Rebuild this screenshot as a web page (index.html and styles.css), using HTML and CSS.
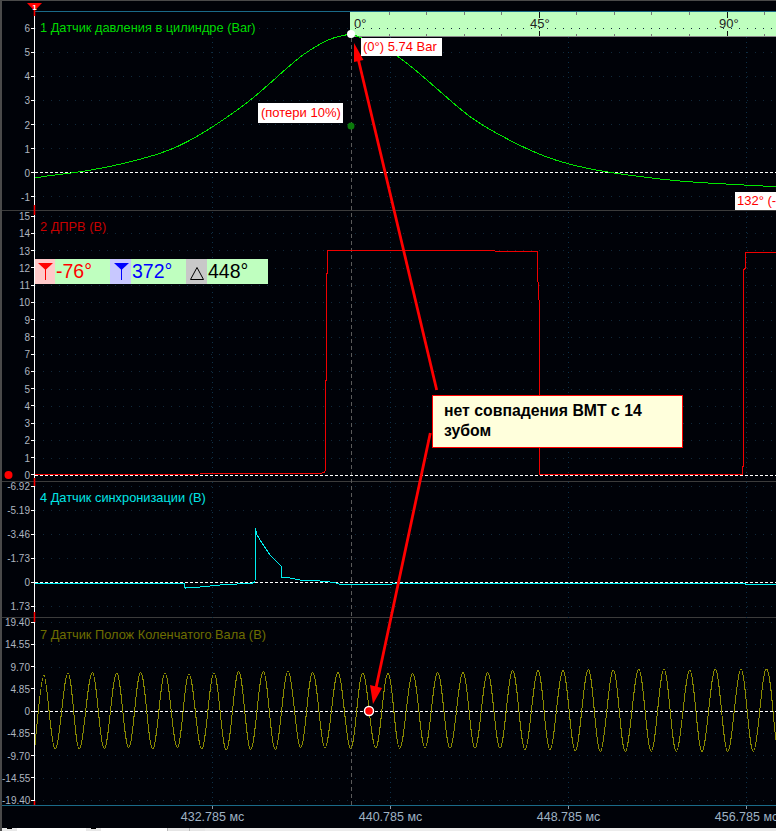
FILE: index.html
```html
<!DOCTYPE html>
<html lang="ru">
<head>
<meta charset="utf-8">
<title>Осциллограмма</title>
<link rel="stylesheet" href="styles.css">
</head>
<body>
<main class="scope">
  <div class="topgap"></div>

  <section class="pane pane-1">
    <div class="axis">
      <span class="tick">6</span><span class="tick">5</span><span class="tick">4</span><span class="tick">3</span><span class="tick">2</span><span class="tick">1</span><span class="tick">0</span><span class="tick">-1</span>
    </div>
    <div class="plot"><h2 class="title title-green">1 Датчик давления в цилиндре (Bar)</h2></div>
  </section>

  <section class="pane pane-2">
    <div class="axis">
      <span class="tick">15</span><span class="tick">14</span><span class="tick">13</span><span class="tick">12</span><span class="tick">11</span><span class="tick">10</span><span class="tick">9</span><span class="tick">8</span><span class="tick">7</span><span class="tick">6</span><span class="tick">5</span><span class="tick">4</span><span class="tick">3</span><span class="tick">2</span><span class="tick">1</span><span class="tick">0</span>
    </div>
    <div class="plot"><h2 class="title title-red">2 ДПРВ (В)</h2></div>
  </section>

  <section class="pane pane-4">
    <div class="axis">
      <span class="tick">-6.92</span><span class="tick">-5.19</span><span class="tick">-3.46</span><span class="tick">-1.73</span><span class="tick">0</span><span class="tick">1.73</span>
    </div>
    <div class="plot"><h2 class="title title-cyan">4 Датчик синхронизации (В)</h2></div>
  </section>

  <section class="pane pane-7">
    <div class="axis">
      <span class="tick">19.40</span><span class="tick">14.55</span><span class="tick">9.70</span><span class="tick">4.85</span><span class="tick">0</span><span class="tick">-4.85</span><span class="tick">-9.70</span><span class="tick">-14.55</span><span class="tick">-19.40</span>
    </div>
    <div class="plot"><h2 class="title title-olive">7 Датчик Полож Коленчатого Вала (В)</h2></div>
  </section>

  <footer class="timescale">
    <span class="time">432.785 мс</span><span class="time">440.785 мс</span><span class="time">448.785 мс</span><span class="time">456.785 мс</span>
  </footer>

  <div class="statusbar">
    <span class="sb-btn"><i class="sb-glyph"></i></span>
    <span class="sb-field sb-field-a"></span>
    <span class="sb-btn"><i class="sb-glyph"></i></span>
    <span class="sb-field sb-field-b"></span>
    <span class="sb-gray"></span>
    <span class="sb-gray sb-gray-b"></span>
    <span class="sb-scroll"></span>
  </div>

  <div class="degrees">
    <svg class="degree-ticks" width="426" height="25" viewBox="350 12 426 25">
      <path class="deg-minor" d="M389.500 12V15M389.500 34V36M426.500 12V15M426.500 34V36M464.500 12V15M464.500 34V36M501.500 12V15M501.500 34V36M576.500 12V15M576.500 34V36M614.500 12V15M614.500 34V36M651.500 12V15M651.500 34V36M689.500 12V15M689.500 34V36M764.500 12V15M764.500 34V36"/>
      <path class="deg-major" d="M539.500 12V18M539.500 31V36M727.500 12V18M727.500 31V36"/>
    </svg>
    <span class="deg deg-0">0°</span>
    <span class="deg deg-45">45°</span>
    <span class="deg deg-90">90°</span>
  </div>

  <svg class="traces" width="776" height="831" viewBox="0 0 776 831">
    <path class="grid-h" d="M35 28.500H776M35 52.500H776M35 76.500H776M35 100.500H776M35 124.500H776M35 148.500H776M35 196.500H776M35 216.500H776M35 233.500H776M35 250.500H776M35 268.500H776M35 285.500H776M35 302.500H776M35 320.500H776M35 337.500H776M35 354.500H776M35 371.500H776M35 389.500H776M35 406.500H776M35 423.500H776M35 440.500H776M35 458.500H776M35 486.500H776M35 510.500H776M35 534.500H776M35 558.500H776M35 606.500H776M35 622.500H776M35 644.500H776M35 667.500H776M35 689.500H776M35 733.500H776M35 755.500H776M35 778.500H776M35 800.500H776"/>
    <path class="grid-v" d="M212.500 37V805M390.500 37V805M568.500 37V805M746.500 37V805"/>
    <path class="cursor" d="M351.500 38V805"/>
    <path class="zero" d="M35 172.500H776M35 475.500H776M35 582.500H776M35 711.500H776"/>
    <path class="time-ticks" d="M212.500 806V809M390.500 806V809M568.500 806V809M746.500 806V809"/>

    <path class="trace trace-green" d="M35 178 L47.500 176 Q60 174.300 71.500 173 Q83 171.500 96.500 169 Q110 166.700 125 163 Q140 159.500 155 155 Q170 150 178.500 146 Q187 142 195 137.500 Q203 133 214.500 125.500 Q226 118 236.500 110.500 Q247 103 257 94.500 Q267 86 277 77 Q287 68 293.500 62.500 Q300 57 305 53.500 Q310 50 315 47 Q320 44 325 41.500 Q330 39 335 37.500 Q340 36 345.500 35 L351 34 L360.500 37.500 Q370 41 377.500 44.500 Q385 48 392.500 52.850 Q400 57.700 409.500 65.350 Q419 73 432.500 84.850 Q446 96.700 457.500 106.700 Q469 116.700 482.500 125 Q496 133.300 512.500 141.650 Q529 150 542.500 155.350 Q556 160.700 571 164.500 Q586 168.300 599.500 170.650 Q613 173 633 175.650 Q653 178.300 669.500 180 Q686 181.700 702.500 182.700 Q719 183.700 747.500 185.200 L776 186.700"/>

    <path class="trace trace-red" d="M35 474.500 L160 474.500 L240 473.500 L320 473.500 L324.500 472.500 L325.500 470 L325.500 380 L326.500 380 L326.500 273 L327.500 273 L327.500 250.500 L450 250.500 L537.500 251.500 L537.500 282 L538.500 282 L538.500 300 L539.500 300 L539.500 474.500 L742.500 474.500 L742.500 466 L743.500 466 L743.500 270 L745.500 268 L745.500 252.500 L776 252.500"/>

    <path class="trace trace-cyan" d="M35 583.500 L184 583.500 L184.500 586 L185.500 589 L186 588 L200 587 L215 585.500 L225 584.500 L250 583.500 L255 582.500 L255.500 529 L257 535 L262 543 L270 555 L280 565 L281 566 L281.500 578 L283 577 L290 578 L300 580 L320 581 L335 582.500 L340 584.500 L385 584.500 L400 583.500 L745 583.500 L746 584.500 L776 584.500"/>

    <path class="trace trace-olive" d="M35 745 C37 725 41 675 44 675 S51 749 55.300 749 S63.700 673 68 673 S75 749 79.300 749 S87.800 672.500 92.300 672.500 S99.800 748.500 104.300 748.500 S112.200 673 116.700 673 S124.200 747.500 128.700 747.500 S136.200 672.500 140.700 672.500 S148.200 749 152.700 749 S160.500 673 165 673 S172.800 747.500 177.300 747.500 S184.500 674 189 674 S197.200 749 201.700 749 S209.500 673 214 673 S221.800 750 226.300 750 S234.200 671.500 238.700 671.500 S246.200 749.500 250.700 749.500 S258.800 671.500 263.300 671.500 S270.800 749.500 275.300 749.500 S283.500 671 288 671 S296.200 747.500 300.700 747.500 S308.200 672.500 312.700 672.500 S320.500 748 325 748 S333.500 672.500 338 672.500 S346.200 748.500 350.700 748.500 S358.200 673 362.700 673 S371.200 748 375.700 748 S383.500 673.500 388 673.500 S395.200 748.300 399.700 748.300 S408.200 673.500 412.700 673.500 S420.500 748 425 748 S433.200 672.500 437.700 672.500 S445.500 748.300 450 748.300 S458.500 672.500 463 672.500 S470.500 748.300 475 748.300 S483.200 672.500 487.700 672.500 S495.500 748.300 500 748.300 S508.200 670.500 512.700 670.500 S520.500 749.700 525 749.700 S533.500 670.500 538 670.500 S545.500 749.700 550 749.700 S558.500 670.500 563 670.500 S570.800 751 575.300 751 S583.800 669.500 588.300 669.500 S595.800 751.500 600.300 751.500 S608.800 670 613.300 670 S620.800 751.500 625.300 751.500 S634.200 669 638.700 669 S646.800 751.500 651.300 751.500 S659.500 669 664 669 S671.800 751.500 676.300 751.500 S685.200 670 689.700 670 S697.500 751.500 702 751.500 S710.800 669 715.300 669 S723.200 751.500 727.700 751.500 S736.500 669 741 669 S748.800 751.500 753.300 751.500 S761.800 669 766.300 669 S773 720 776 740"/>

    <path class="red-axis" d="M34.500 3V16M34.500 205V215M34.500 478V486M34.500 612V622M34.500 801V805"/>
    <polygon class="fill-red" points="27,3 42,3 34.500,11"/>
    <text class="flag-num" x="34.500" y="9.500">1</text>

    <circle class="dot-white" cx="351" cy="34" r="4"/>
    <circle class="dot-green" cx="351" cy="126" r="3.500"/>
    <circle class="fill-red" cx="8.500" cy="475" r="4"/>

    <path class="arrow" d="M436.700 390 L358 58"/>
    <polygon class="fill-red" points="354,43 354,62 363.500,60"/>
    <path class="arrow" d="M430.300 433 L376 688"/>
    <polygon class="fill-red" points="373,704 370,685 382,688"/>
    <circle class="dot-red" cx="369" cy="711" r="4.500"/>
  </svg>

  <div class="readout">
    <span class="badge badge-red">
      <svg width="20" height="25" viewBox="0 0 20 25"><polygon class="fill-red" points="3,4 18,4 10.500,11"/><path class="stem-red" d="M10.500 9V21"/></svg>
    </span>
    <span class="val val-red">-76°</span>
    <span class="badge badge-blue">
      <svg width="21" height="25" viewBox="0 0 21 25"><polygon class="fill-blue" points="4,4 19,4 11.500,11"/><path class="stem-blue" d="M11.500 9V21"/></svg>
    </span>
    <span class="val val-blue">372°</span>
    <span class="badge badge-gray">
      <svg width="21" height="25" viewBox="0 0 21 25"><polygon class="delta" points="11,8.500 17.500,20.500 4.500,20.500"/></svg>
    </span>
    <span class="val val-black">448°</span>
  </div>

  <span class="tag tag-peak">(0°) 5.74 Bar</span>
  <span class="tag tag-loss">(потери 10%)</span>
  <span class="tag tag-end">132° (-</span>

  <div class="callout">нет совпадения ВМТ с 14 зубом</div>
</main>
</body>
</html>
```

FILE: styles.css
```css
* { box-sizing: border-box; }

html, body {
  margin: 0;
  padding: 0;
  background: #000208;
}

.scope {
  position: relative;
  display: flex;
  flex-direction: column;
  width: 776px;
  height: 831px;
  overflow: hidden;
  background: #000208;
  border-top: 1px solid #4a4a4a;
  border-left: 2px solid #4a4a4a;
  font-family: "Liberation Sans", Arial, sans-serif;
}

.topgap { height: 10px; flex: none; }

/* channel panes */
.pane {
  display: flex;
  flex: none;
  border-bottom: 1px solid #3c3c3c;
}
.pane-1 { height: 200px; }
.pane-2 { height: 271px; }
.pane-4 { height: 136px; }
.pane-7 { height: 188px; border-bottom: 1px solid #1a6a88; }

.axis {
  display: flex;
  flex: none;
  flex-direction: column;
  justify-content: space-between;
  width: 33px;
  border-right: 1px solid #fff;
}
.pane-1 .axis { padding: 12px 0 8px; }
.pane-2 .axis { padding: 0 0 1px; }
.pane-4 .axis { margin-top: -1px; padding: 0 0 6px; }
.pane-7 .axis { margin-top: -1px; padding: 0; }

.tick {
  display: flex;
  flex: none;
  align-items: center;
  justify-content: flex-end;
  gap: 1px;
  height: 10px;
  padding-top: 2px;
  font-size: 10px;
  line-height: 10px;
  color: #aeb6c0;
  white-space: nowrap;
}
.tick::after {
  content: "";
  width: 3px;
  height: 1px;
  margin-top: -2px;
  background: #fff;
}

.plot {
  flex: 1;
  min-width: 0;
  padding: 9px 0 0 5px;
}
.pane-1 .plot { border-top: 1px solid #1a6a88; padding-top: 9px; }
.pane-7 .plot { padding-top: 10px; }

.title {
  margin: 0;
  font-size: 12.8px;
  font-weight: normal;
  line-height: 14px;
  white-space: nowrap;
}
.title-green { color: #00dc00; }
.title-red { color: #c80000; }
.title-cyan { color: #00e6e6; }
.title-olive { color: #6e6e00; }

/* time axis */
.timescale {
  display: flex;
  flex: none;
  height: 22px;
  padding: 3px 0 0 121.5px;
}
.time {
  flex: none;
  width: 178px;
  font-size: 12.5px;
  line-height: 16px;
  color: #9fb2c4;
  text-align: center;
}

/* bottom window strip */
.statusbar {
  display: flex;
  flex: none;
  height: 3px;
  background: #fff;
}
.sb-btn {
  flex: none;
  display: flex;
  justify-content: center;
  width: 15px;
  background: #e8e8e8;
}
.sb-glyph { width: 5px; height: 1px; background: #000; }
.sb-field { flex: none; background: #fff; }
.sb-field-a { width: 69px; }
.sb-field-b { width: 66px; }
.sb-gray { flex: none; width: 22px; background: #e6e6e6; border-left: 1px solid #bbb; }
.sb-gray-b { width: 16px; }
.sb-scroll { flex: 1; background: #ececec; }

/* degree scale over channel 1 */
.degrees {
  position: absolute;
  top: 11px;
  left: 348px;
  width: 426px;
  height: 25px;
  background: #bfffbf;
  border-bottom: 1px solid #8a8a8a;
}
.degree-ticks { position: absolute; top: 0; left: 0; display: block; }
.deg-minor, .deg-major { fill: none; stroke: #777; stroke-width: 1; }
.deg-major { stroke: #111; }
.deg {
  position: absolute;
  top: 5px;
  font-size: 13px;
  line-height: 14px;
  color: #222;
}
.deg-0 { left: 4px; }
.deg-45 { left: 180px; }
.deg-90 { left: 369px; }

/* overlay with all traces */
.traces {
  position: absolute;
  top: -1px;
  left: -2px;
  display: block;
  pointer-events: none;
}
.grid-h { fill: none; stroke: #10283a; stroke-width: 1; stroke-dasharray: 1 7; }
.grid-v { fill: none; stroke: #0c3048; stroke-width: 1; stroke-dasharray: 1 4; }
.cursor { fill: none; stroke: #5a5a5a; stroke-width: 1; stroke-dasharray: 4 3; }
.zero { fill: none; stroke: #fff; stroke-width: 1; stroke-dasharray: 3 2; }
.time-ticks { fill: none; stroke: #8a96a2; stroke-width: 1; }

.trace { fill: none; stroke-linejoin: round; shape-rendering: crispEdges; }
.trace-green { stroke: #00e600; stroke-width: 1; }
.trace-red { stroke: #f00000; stroke-width: 1; }
.trace-cyan { stroke: #00f0f0; stroke-width: 1; }
.trace-olive { stroke: #8a8a00; stroke-width: 1; }

.red-axis { fill: none; stroke: #f00; stroke-width: 1.5; }
.fill-red { fill: #f00; }
.fill-blue { fill: #00f; }
.flag-num {
  fill: #fff;
  font-family: "Liberation Sans", Arial, sans-serif;
  font-size: 8px;
  font-weight: bold;
  text-anchor: middle;
}
.dot-white { fill: #fff; }
.dot-green { fill: #0a7a0a; }
.dot-red { fill: #f00; stroke: #fff; stroke-width: 1.5; }
.arrow { fill: none; stroke: #f00; stroke-width: 2.8; }

/* readout bar */
.readout {
  position: absolute;
  top: 258px;
  left: 33px;
  display: flex;
  width: 233px;
  height: 25px;
  background: #bfffbf;
}
.badge { flex: none; display: block; height: 25px; }
.badge svg { display: block; }
.badge-red { width: 20px; background: #ffcaca; }
.badge-blue { width: 21px; background: #c8c8ff; }
.badge-gray { width: 21px; background: #c8c8c8; }
.stem-red, .stem-blue { fill: none; stroke-width: 1; }
.stem-red { stroke: #f00; }
.stem-blue { stroke: #00f; }
.delta { fill: none; stroke: #000; stroke-width: 1; }
.val {
  flex: none;
  width: 55px;
  padding-left: 1px;
  font-size: 19.5px;
  line-height: 25px;
}
.val-red { color: #f00; }
.val-blue { color: #00f; }
.val-black { width: 61px; color: #000; }

/* small value tags */
.tag {
  position: absolute;
  background: #fff;
  color: #f00;
  font-size: 13px;
  line-height: 18px;
  white-space: nowrap;
}
.tag-peak { top: 37px; left: 359px; width: 81px; height: 18px; padding-left: 2px; }
.tag-loss { top: 102px; left: 256px; width: 85px; height: 20px; padding: 1px 0 0 3px; }
.tag-end { top: 191px; left: 733px; width: 41px; height: 18px; padding-left: 2px; }

/* annotation */
.callout {
  position: absolute;
  top: 394px;
  left: 430px;
  width: 251px;
  height: 53px;
  padding: 5px 10px 0 11px;
  background: #ffffdc;
  border: 1px solid #f00;
  font-size: 15.8px;
  font-weight: bold;
  line-height: 19.500px;
  color: #000;
}
```
